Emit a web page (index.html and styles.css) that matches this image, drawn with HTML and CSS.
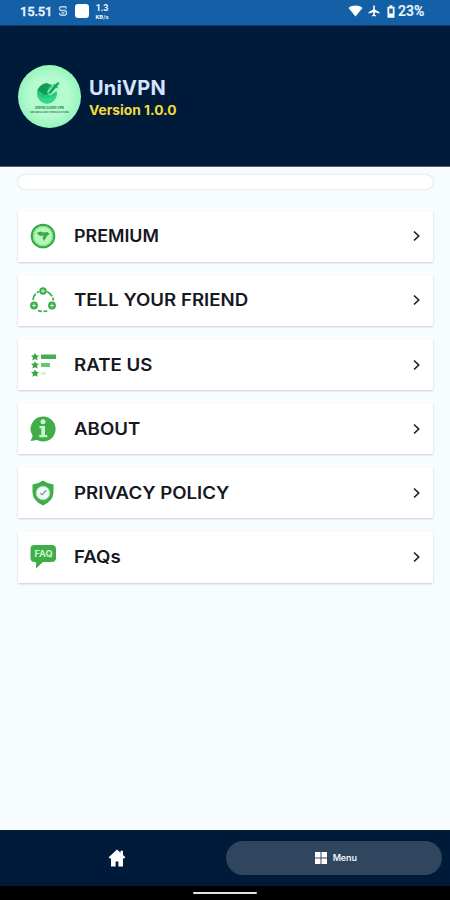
FILE: index.html
```html
<!DOCTYPE html>
<html lang="en">
<head>
<meta charset="utf-8">
<title>UniVPN</title>
<link rel="stylesheet" href="styles.css">
</head>
<body>
<div class="status">
  <span class="time">15.51</span>
  <svg class="s-sync" width="10" height="12" viewBox="0 0 10 12" fill="none" stroke="#bcd5ee" stroke-width="1.400"><path d="M8 1.700H3.500Q1.500 1.700 1.500 3.500T3.500 5.500H8M2 5.500h4.500Q8.500 5.500 8.500 8T6 10.300H4Q1.500 10.300 1.500 8M3.500 8h3M8 1.700v2"/></svg>
  <span class="s-square"></span>
  <span class="speed"><b>1.3</b><i>KB/s</i></span>
  <svg class="s-wifi" width="15" height="12" viewBox="0 0 15 12" fill="#fff"><path d="M.5 3C4-.2 11-.2 14.500 3L7.500 11.500z"/></svg>
  <svg class="s-plane" width="12" height="12" viewBox="0 0 12 12" fill="#fff"><path d="M5.200.8q.8-1 1.600 0V4.500l4.700 2.800v1.200L6.800 7.200v2.500l1.400 1v.9L6 11l-2.200.6v-.9l1.400-1V7.200L.5 8.500V7.300l4.700-2.800z"/></svg>
  <svg class="s-batt" width="8" height="13" viewBox="0 0 8 13"><path d="M2.600.2h2.800v1.500H7.500v11H.5v-11h2.100z" fill="#fff"/><path d="M2.200 3.500h3.600v5H2.200z" fill="#1762a8"/></svg>
  <span class="pct">23%</span>
</div>
<header class="header">
  <div class="avatar">
    <svg width="63" height="63" viewBox="0 0 63 63">
      <circle cx="29" cy="28.500" r="10" fill="#22c976"/>
      <path d="M19.500 25q3-6 9-7l4 2-3 4 3 4-6 2-4-3z" fill="#139a55"/>
      <path d="M29 27L39 16.500h2v8l-9 6z" fill="#a8f8c8"/>
      <path d="M30 28l6-7.500-1-1.500 2.500.5 2.500-2.500 1.500 1.500-2.500 2.500 1 2.500-2-1-5.500 6.500z" fill="#12a05a"/>
      <path d="M20 31q9 5 18.500-1-2 8.500-9.500 8.500-6.500 0-9-7.500z" fill="#2ed884"/>
    </svg>
    <span class="logo-name">GREEN GUARD VPN</span>
    <span class="logo-tag">SECURE &amp; FAST VPN SOLUTIONS</span>
  </div>
  <div class="brand"><div class="name">UniVPN</div><div class="version">Version 1.0.0</div></div>
</header>
<main class="content">
  <div class="strip"></div>
  <nav class="list">
    <div class="card"><svg class="icon" viewBox="0 0 26 26"><circle cx="13" cy="13" r="11.300" fill="#b7f7b9" stroke="#35a742" stroke-width="2"/><circle cx="13" cy="13" r="9.500" fill="none" stroke="#74db7c"/><path d="M6.500 10l4-1.500 3 1 4-.5 2 2-2.500 2-3 5-1.500-3.500 1.500-2-4 .5z" fill="#40a94b"/></svg><span class="label tight">PREMIUM</span><svg class="chev" viewBox="0 0 8 12"><path d="M1.500 1.500L6.200 6 1.500 10.500"/></svg></div>
    <div class="card"><svg class="icon" viewBox="0 0 26 26"><g fill="none" stroke="#3cab49" stroke-width="1.700"><path d="M3 13q.5-6 6-8.500M17 4.500q5.500 3 6.500 9" stroke-dasharray="7 1.500"/><path d="M8 23.500q5 2 10 0" stroke-dasharray="4 1.500"/></g><g fill="#3cab49"><circle cx="13" cy="4" r="3.700"/><circle cx="4" cy="18.500" r="3.900"/><circle cx="22" cy="18.500" r="3.900"/></g><path d="M13 2v4M11 4h4M4 16.500v4M2 18.500h4M22 16.500v4M20 18.500h4" stroke="#c8f3ca" stroke-width="1.100"/></svg><span class="label">TELL YOUR FRIEND</span><svg class="chev" viewBox="0 0 8 12"><path d="M1.500 1.500L6.200 6 1.500 10.500"/></svg></div>
    <div class="card"><svg class="icon" viewBox="0 0 26 26"><defs><path id="star" d="M0-4l1.200 2.500 2.800.2-2 2 .7 2.900L0 2.200l-2.700 1.400.7-2.900-2-2 2.800-.2z"/></defs><g fill="#35a643"><use href="#star" x="5" y="4.800"/><use href="#star" x="5" y="13"/><use href="#star" x="5" y="21.200"/></g><path d="M11 2.500h15v4.500H11z" fill="#48ae52"/><path d="M11 11h9v4h-9z" fill="#65c96d"/><path d="M11 20h5v3h-5z" fill="#d5f5d6"/></svg><span class="label">RATE US</span><svg class="chev" viewBox="0 0 8 12"><path d="M1.500 1.500L6.200 6 1.500 10.500"/></svg></div>
    <div class="card"><svg class="icon" viewBox="0 0 26 26"><path d="M13 .5a12.500 12.500 0 1 1-6 23.400L.5 25l2.200-5A12.500 12.500 0 0 1 13 .5z" fill="#40ad49"/><circle cx="13" cy="5.800" r="2.500" fill="#c5f8c8"/><path d="M9.500 10H15v9h2.300v2.300H9.200V19h2.100v-6.800H9.500z" fill="#c5f8c8"/></svg><span class="label">ABOUT</span><svg class="chev" viewBox="0 0 8 12"><path d="M1.500 1.500L6.200 6 1.500 10.500"/></svg></div>
    <div class="card"><svg class="icon" viewBox="0 0 26 26"><path d="M13 .5q4 3 10.500 4v8Q23 21 13 25.500 3 21 2.500 12.500v-8Q9 3.500 13 .5z" fill="#3fae49"/><circle cx="13" cy="13" r="6.800" fill="#eff8fa" stroke="#a7dcb0"/><path d="M10.200 13.200l2 1.500 4-4.500" fill="none" stroke="#75a493" stroke-width="1.300"/></svg><span class="label">PRIVACY POLICY</span><svg class="chev" viewBox="0 0 8 12"><path d="M1.500 1.500L6.200 6 1.500 10.500"/></svg></div>
    <div class="card"><svg class="icon" viewBox="0 0 26 26"><path d="M4.500 1h17Q26 1 26 5v9q0 4-4.500 4H13l-7 6.500V18H4.500Q.5 18 .5 14V5q0-4 4-4z" fill="#40ad49"/><text class="faq" x="13.500" y="13" text-anchor="middle" textLength="18" lengthAdjust="spacingAndGlyphs">FAQ</text></svg><span class="label">FAQs</span><svg class="chev" viewBox="0 0 8 12"><path d="M1.500 1.500L6.200 6 1.500 10.500"/></svg></div>
  </nav>
</main>
<footer class="tabs">
  <div class="tab"><svg width="18" height="18" viewBox="0 0 18 18" fill="#fff"><path d="M9 .5L.7 8.200 1.900 9.800 3 9V17.500h4.600v-5h2.800v5H15V9l1.100.8 1.200-1.600-2.300-2.100V1.700h-2.500v2z"/></svg></div>
  <div class="tab active"><svg width="12" height="12" viewBox="0 0 12 12" fill="#fff"><path d="M0 0h5.500v5.500H0zM6.500 0H12v5.500H6.500zM0 6.500h5.500V12H0zM6.500 6.500H12V12H6.500z"/></svg><span>Menu</span></div>
</footer>
<div class="sysbar"><span></span></div>
</body>
</html>
```
FILE: styles.css
```css
* { box-sizing: border-box; }
body {
  margin: 0;
  height: 900px;
  display: flex;
  flex-direction: column;
  overflow: hidden;
  background: #f7fcff;
  font-family: Inter, "Liberation Sans", sans-serif;
}
svg { display: block; flex: none; }

.status {
  height: 26px;
  padding: 0 25px 3px 20px;
  display: flex;
  align-items: center;
  background: #1460a6;
  border-bottom: 1px solid #0b3b6e;
  color: #eef6ff;
  font: 500 13px Roboto, sans-serif;
}
.time { width: 32px; letter-spacing: -0.2px; -webkit-text-stroke: 0.3px #eef6ff; }
.s-sync { margin-left: 6px; }
.s-square { width: 14px; height: 14px; margin-left: 7px; border-radius: 3px; background: #fff; }
.speed { display: flex; flex-direction: column; align-items: center; width: 14px; margin-left: 6px; }
.speed b { font-size: 9px; line-height: 10px; letter-spacing: -0.1px; }
.speed i { font: 700 6px/7px Roboto, sans-serif; }
.s-wifi { margin-left: auto; }
.s-plane { margin-left: 5px; }
.s-batt { margin-left: 7px; }
.pct { margin-left: 3px; width: 27px; font-size: 14px; -webkit-text-stroke: 0.2px #eef6ff; }

.header {
  height: 141px;
  padding: 39px 18px 0;
  display: flex;
  background: #001b39;
  border-bottom: 1px solid #5b6073;
}
.avatar {
  position: relative;
  width: 63px;
  height: 63px;
  border-radius: 50%;
  background: radial-gradient(circle, #b4fbd0 0 45%, #94f5bb 72%);
}
.logo-name, .logo-tag {
  position: absolute;
  left: 0;
  width: 63px;
  text-align: center;
  white-space: nowrap;
  color: #16894f;
  font-weight: 700;
}
.logo-name { top: 41px; font-size: 3px; line-height: 4px; }
.logo-tag { top: 46px; font-size: 2.4px; line-height: 3px; color: #356b51; }
.brand { padding: 11px 0 0 8px; }
.name { font-size: 20px; line-height: 24px; font-weight: 700; color: #d6e4ff; letter-spacing: 0.2px; }
.version {
  margin-top: 3px;
  font-size: 13px;
  line-height: 15px;
  font-weight: 700;
  color: #f4dc3c;
  transform: scaleX(1.06);
  transform-origin: left;
}

.content { flex: 1; padding: 8px 17px 0 18px; }
.strip {
  height: 14px;
  border-radius: 7px;
  background: #fff;
  box-shadow: 0 0 2px #00000038;
}
.list { margin-top: 21.700px; display: flex; flex-direction: column; gap: 13.2px; }
.card {
  height: 51px;
  padding: 0 12px;
  display: flex;
  align-items: center;
  background: #fff;
  box-shadow: 0 1px 2px #00000030;
}
.icon { width: 26px; height: 26px; }
.label {
  margin: 0 auto 0 18px;
  font-size: 17px;
  line-height: 22px;
  font-weight: 600;
  color: #16171f;
  transform: scaleX(1.098);
  transform-origin: left;
}
.tight { transform: scaleX(1.05); }
.chev { width: 9px; height: 12px; fill: none; stroke: #20222a; stroke-width: 1.7; }
.faq { font: 700 8.500px Inter, sans-serif; fill: #c9f7ca; }

.tabs {
  height: 56px;
  padding: 0 8px 2px 9px;
  display: grid;
  grid-template-columns: 1fr 1fr;
  align-items: center;
  background: #001b39;
  border-top: 1px solid #10202c;
}
.tab {
  height: 34px;
  display: flex;
  align-items: center;
  justify-content: center;
  gap: 6px;
  border-radius: 17px;
}
.active { padding-left: 4px; background: #30465f; color: #eef3fa; font-size: 9px; font-weight: 600; letter-spacing: -0.1px; }
.sysbar { height: 14px; display: flex; justify-content: center; align-items: center; background: #000; }
.sysbar span { width: 64px; height: 2px; border-radius: 1px; background: #e5e5dd; }
```
